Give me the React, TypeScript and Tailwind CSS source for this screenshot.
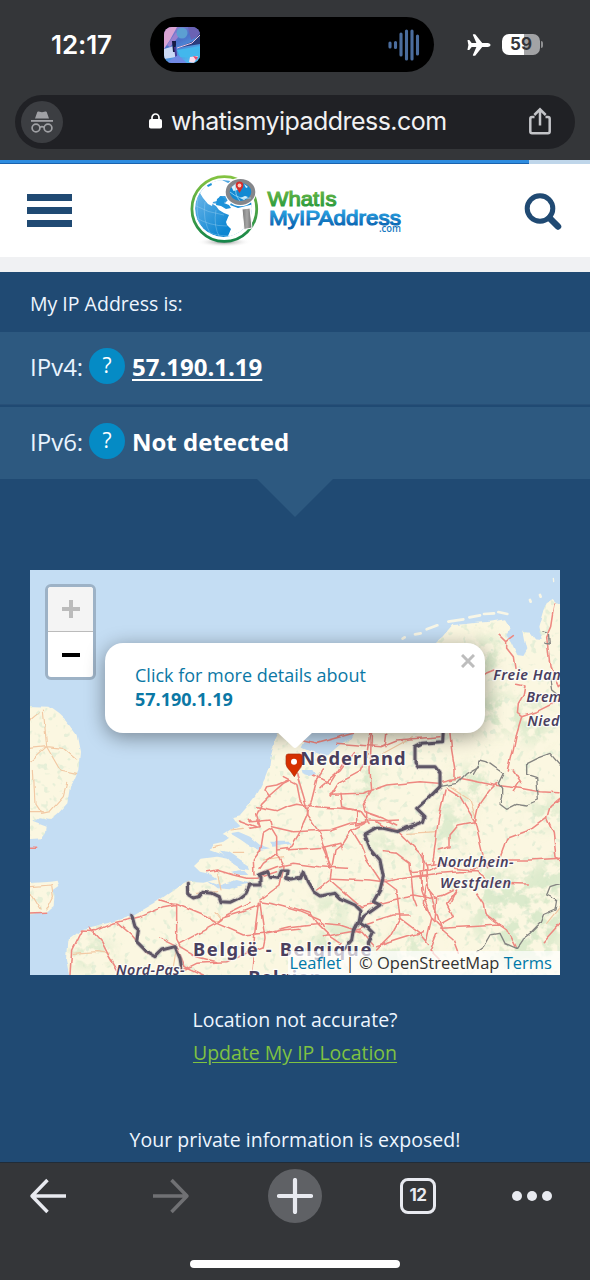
import React from "react";

const land =
  "M120,1230 L108,1170 112,1112 135,1095 155,1078 250,1055 305,1037 370,1000 440,950 475,932 520,935 560,925 540,912 510,905 492,888 515,866 560,860 600,868 575,850 542,838 550,822 580,815 600,802 578,792 600,778 630,770 612,752 605,742 630,735 650,712 675,680 690,655 705,625 718,590 722,560 735,510 755,470 850,300 1210,225 1240,200 1270,165 1310,162 1340,158 1380,155 1425,148 1440,172 1428,195 1445,220 1462,255 1480,258 1492,238 1485,210 1480,185 1500,188 1515,208 1535,210 1525,170 1538,125 1550,100 1565,90 1580,104 1600,100 1600,1230Z";
const england =
  "M-15,408 L55,410 85,432 110,455 140,495 150,545 145,600 132,630 120,650 112,700 85,730 60,750 30,745 10,755 50,770 48,785 35,805 -15,808Z M-15,940 L60,935 80,932 85,948 68,960 76,980 74,1008 50,1028 -15,1036Z";

const greens: [number, number, number, number][] = [
  [1440, 980, 140, 60], [1520, 1040, 110, 80], [1400, 1060, 80, 50], [1380, 930, 60, 30],
  [1560, 920, 70, 50], [1490, 1130, 100, 60], [1250, 800, 50, 30], [1260, 745, 60, 30],
  [1330, 640, 70, 50], [1080, 820, 70, 25], [900, 1010, 60, 30], [930, 1110, 80, 50],
  [1400, 430, 70, 60], [1510, 460, 50, 60], [1550, 730, 50, 40], [1000, 640, 40, 60],
  [1150, 1120, 60, 40], [1370, 260, 50, 60], [180, 1150, 70, 40], [1080, 1170, 60, 40],
];

const roads = [
  // Randstad and the west
  "M780,630 L760,640 720,675 695,700 680,735 690,770 M760,620 L800,640 810,690 835,720 830,740 805,795 780,835 740,840",
  "M680,710 L740,722 770,708 800,700 860,710 930,715 990,720 1020,760",
  "M720,680 L705,660 710,650 740,645 775,630 M655,745 L665,755 720,750 725,770 790,785 900,780 960,760 1010,757",
  "M725,775 L700,790 692,840 670,870 672,915 M725,775 L740,800 740,850 700,880 690,895 M740,850 L762,890 750,945 690,990",
  "M680,750 L690,770 660,775 M625,750 L680,770",
  // Centre and east
  "M800,610 L815,660 830,710 835,740 870,790 890,850 900,895 M880,600 L860,630 845,690 835,720 M870,650 L930,600 970,545",
  "M900,680 L925,640 990,605 1010,560 1020,490 M900,673 L1000,670 1070,645 1170,635 1225,640 1290,625 M1025,480 L1020,600 1025,660 1000,700 1005,725 1060,745 1100,765",
  "M800,505 L860,520 970,490 M920,520 L1050,530 1100,510 1230,500 M950,560 L900,640 850,615",
  "M1065,530 L1070,490 M930,670 L935,710 990,725 M980,720 L980,765 1010,755 1010,725",
  "M770,840 L840,835 880,832 930,820 935,840 M880,835 L905,895 900,930 980,1000 995,1010 M900,930 L860,960 M690,910 L740,890 790,880 870,890 950,895",
  "M1010,757 L965,780 940,820 915,840 905,895 M965,780 L990,820 1010,870 1050,930 1060,945 M905,925 L1020,930 1060,935 1150,920 1190,918",
  "M1040,755 L1060,768 1100,780 1130,810 1170,850 1190,890 1195,950 1215,1010 1235,1080 M1020,750 L1060,752 1108,750",
  // Ruhr
  "M1060,845 L1100,850 1140,880 1150,985 1160,1010 M1145,920 L1230,910 1290,905 1340,905 1370,930 1400,940 1495,942",
  "M1190,885 L1230,880 1270,895 1330,900 1350,885 1400,870 1500,870 1590,865",
  "M1140,905 L1200,900 1230,885 M1180,850 L1175,960 1205,1045 1190,1110 M1190,940 L1180,1000 1210,1050 1230,1070",
  "M1245,660 L1225,750 1208,880 M1250,655 L1290,680 1335,755 1360,860 1370,890 M1225,840 L1260,830 1260,795 1285,765 1335,755",
  "M1335,755 L1345,710 1380,660 1400,640 M1290,625 L1390,645 1470,655 1530,665 1590,668 M1470,635 L1450,665 M1450,600 L1475,640",
  "M1590,685 L1560,710 1550,745 1510,775 1430,805 1410,860 M1550,745 L1570,790 1578,860 1590,875",
  "M1260,1000 L1280,960 1250,1000 1270,1040 1235,1060 M1120,980 L1150,975 1200,985 1240,975 1270,960",
  "M1230,1075 L1320,1070 1410,1065 M1340,970 L1360,1000 1365,1030 1395,1055 1430,1080 1455,1130",
  "M1060,930 L1100,960 1110,1045 1170,1090 1195,1120 M1040,1050 L1090,1035 1140,1035 M1110,1045 L1080,1100 1040,1140 M1050,1000 L1110,985",
  // Belgium and northern France
  "M120,1215 L125,1140 155,1080 200,1082 250,1060 330,1040 400,1010 440,1003 530,1040 560,1060 640,1095 700,1090 760,1080 810,1075",
  "M175,1070 L215,1115 235,1155 270,1215 M265,1060 L305,1095 335,1130 350,1150",
  "M390,990 L440,1005 440,1110 450,1130 M450,1120 L560,1060 575,1045 640,1025 690,1005 M450,1130 L500,1160 560,1175 M560,1060 L590,1035 660,1000",
  "M690,995 L720,1000 760,1010 810,1025 870,1050 880,1070 M685,1000 L675,1080 665,1215 M690,1000 L705,1105 700,1130",
  "M460,1200 L500,1180 590,1175 700,1130 M390,1105 L440,1130 465,1190 520,1215 M530,905 L560,900 610,915 650,925 680,925 740,905",
  "M700,1090 L780,1070 870,1060 930,1065 990,1085 M780,1010 L840,1030 860,1060 900,1100 930,1120 M880,1100 L990,1080 1030,1125 M990,1010 L1040,1000",
  "M970,1080 L1030,1060 M1040,1130 L1100,1110 1180,1085 M1235,1080 L1270,1110 1285,1150 M1220,1090 L1200,1140 1240,1180",
  // North-east
  "M1365,312 L1395,300 M1410,195 L1430,215 1450,200 1430,215 1430,235 1450,260 1455,295 M1460,340 L1485,345 1480,375 1465,400 1462,430 1475,440 1460,490 1450,540 1435,600",
  "M1475,440 L1520,425 1590,390 M1575,105 L1565,170 1550,205 1555,240 1560,290 1585,350 1590,345 M1260,490 L1265,540 1275,600 1275,630",
  "M0,832 L20,832 M-2,1032 L50,1030 M1540,1115 L1590,1060 M1200,960 L1220,985 1215,1050 M1170,905 L1180,960",
];

const minorRoads = [
  "M0,535 L50,530 100,535 140,570 M50,530 L40,420 M50,530 L0,575 M50,530 L90,600 140,610 M0,450 L30,425 M10,600 L15,700 35,730 60,725 100,680 110,640 M0,725 L40,725 M0,950 L65,945 70,980 50,1020 M0,970 L30,1020",
  "M130,1150 L200,1145 240,1150 M560,910 L570,960 M500,970 L560,965 M540,1040 L545,1055 575,1050 555,1025 M1260,650 L1320,690 1340,750 M1130,790 L1220,785 M1590,1010 L1550,1060",
  "M600,780 L640,775 M550,830 L575,825 M610,850 L640,850 M430,1190 L440,1130 M700,870 L760,860 M1060,550 L1150,500",
];

const borders = [
  "M475,940 L476,975 490,984 505,980 515,967 545,970 565,980 570,995 600,997 625,985 645,970 655,950",
  "M655,945 L690,945 690,925 685,915 710,905 718,922 745,925 755,900 775,900 770,925 785,930 812,925 820,905 832,935 850,965 870,978 915,970 930,985 975,1005 990,1020 985,1050 970,1080 965,1110 940,1140",
  "M305,1035 L315,1070 325,1080 320,1115 350,1145 375,1160 395,1140 435,1130 450,1165 455,1195",
  "M1240,480 L1238,515 1175,520 1155,530 1155,575 1165,590 1215,590 1230,610 1230,650 1195,685 1160,715 1185,740 1180,755 1100,785 1060,775 1040,775 1005,795 1020,835 1050,870 1060,920 1050,960 1030,995 1050,1005 1000,1040 990,1060 1015,1075 1030,1090 1015,1120 1020,1150",
];

const regional = [
  "M1230,650 L1280,640 1310,610 1345,590 1350,570 1370,575 1405,600 1420,610 1405,640 1415,655 1415,680 1410,700 1430,715 1460,700 1490,705 1525,690 1520,620 1490,610 1490,580 1520,565 1560,550 1590,585",
  "M1590,940 L1560,950 1550,975 1580,990 1575,1020 1540,1035 1530,1060 1500,1090 1480,1105 1460,1135 1425,1120 1410,1090 1380,1095 1360,1130 1340,1145",
  "M1535,185 L1555,190 1558,222 1545,220 M1560,330 L1565,360 1590,380 M1330,610 L1345,585",
];

function MapDrawing() {
  return (
    <svg viewBox="0 0 1590 1215" className="block h-full w-full" preserveAspectRatio="none">
      <defs>
        <clipPath id="land-clip">
          <path d={land} />
          <path d={england} />
        </clipPath>
        <filter id="speckle" x="-10%" y="-10%" width="120%" height="120%">
          <feTurbulence type="fractalNoise" baseFrequency="0.022" numOctaves="4" seed="8" result="n" />
          <feColorMatrix in="n" type="matrix" values="0 0 0 0 0.66  0 0 0 0 0.80  0 0 0 0 0.57  0 0 8 0 -3.5" result="m" />
          <feGaussianBlur in="SourceAlpha" stdDeviation="22" result="b" />
          <feComposite in="m" in2="b" operator="in" />
        </filter>
        <filter id="light-speckle" x="0" y="0" width="100%" height="100%">
          <feTurbulence type="fractalNoise" baseFrequency="0.05" numOctaves="2" seed="3" result="n" />
          <feColorMatrix in="n" type="matrix" values="0 0 0 0 0.74  0 0 0 0 0.84  0 0 0 0 0.66  0 0 9 0 -5.5" />
        </filter>
        <filter id="rough" x="-5%" y="-5%" width="110%" height="110%">
          <feTurbulence type="fractalNoise" baseFrequency="0.022" numOctaves="2" seed="5" result="n" />
          <feDisplacementMap in="SourceGraphic" in2="n" scale="13" xChannelSelector="R" yChannelSelector="G" />
        </filter>
      </defs>
      <rect width="1590" height="1215" fill="#c4ddf3" />
      <g filter="url(#rough)">
        <path d={land} fill="#fbf7e1" />
        <path d={england} fill="#fbf7e1" />
      </g>
      <g clipPath="url(#land-clip)">
        <rect width="1590" height="1215" filter="url(#light-speckle)" opacity=".75" />
        <g filter="url(#speckle)" opacity=".8">
          {greens.map(([x, y, rx, ry]) => (
            <ellipse key={`${x}-${y}`} cx={x} cy={y} rx={rx} ry={ry} />
          ))}
        </g>
      </g>
      {/* Frisian islands */}
      <g fill="none" stroke="#f8f6e6" strokeWidth="8" strokeLinecap="round">
        <path d="M1118,206 L1124,202 M1155,193 L1172,190 M1190,178 L1222,166 M1255,155 L1300,148 M1318,142 L1350,136 M1362,132 L1392,130 M1405,126 L1432,132 M1500,90 L1502,95 M1530,75 L1532,80" />
        <path d="M1570,25 L1571,35" strokeWidth="4" />
      </g>
      {/* Inland water and estuaries */}
      <g fill="#c4ddf3" filter="url(#rough)">
        <path d="M810,485 L975,485 965,505 935,520 905,545 890,560 850,545 815,530 825,510Z" />
        <path d="M812,600 L850,600 858,612 840,618 815,610Z M1445,195 L1462,200 1480,215 1485,235 1460,245Z" />
        <path d="M600,790 L625,785 660,800 690,825 720,835 690,840 655,825 630,808Z M570,842 L595,845 620,862 655,885 660,900 630,895 600,875Z M530,930 L570,945 620,930 655,940 600,958 560,955Z" />
        <path d="M600,905 L640,900 655,915 620,915Z M720,815 L780,815 785,822 730,830Z" />
      </g>
      <g fill="none" strokeLinecap="round" strokeLinejoin="round" filter="url(#rough)">
        {minorRoads.map((d) => (
          <path key={d} d={d} stroke="#f2c9a4" strokeWidth="3.5" />
        ))}
        {roads.map((d) => (
          <path key={d} d={d} stroke="#ee8881" strokeWidth="4.6" />
        ))}
        {regional.map((d) => (
          <path key={d} d={d} stroke="#858582" strokeWidth="4" />
        ))}
        {borders.map((d) => (
          <path key={d} d={d} stroke="#a7a0a8" strokeWidth="15" strokeOpacity=".45" />
        ))}
        {borders.map((d) => (
          <path key={d} d={d} stroke="#5e5766" strokeWidth="9" />
        ))}
      </g>
      <g
        fontFamily="'Noto Sans', 'Open Sans', sans-serif"
        fontWeight="700"
        fill="#4a3f5e"
        stroke="#ffffff"
        strokeOpacity=".75"
        strokeWidth="8"
        strokeLinejoin="round"
        paintOrder="stroke"
      >
        <text x="811" y="586" fontSize="55" textLength="316">Nederland</text>
        <text x="489" y="1157" fontSize="55" textLength="535">België - Belgique</text>
        <text x="655" y="1242" fontSize="55" textLength="220">Belgien</text>
        <g fontStyle="italic" fontSize="43" fontWeight="600">
          <text x="1390" y="331" textLength="248">Freie Hanse</text>
          <text x="1489" y="395" textLength="155">Bremen</text>
          <text x="1492" y="467" textLength="235">Niedersach</text>
          <text x="1221" y="891" textLength="230">Nordrhein-</text>
          <text x="1230" y="954" textLength="213">Westfalen</text>
          <text x="258" y="1216" textLength="206">Nord-Pas-</text>
        </g>
      </g>
      {/* Location pin */}
      <path d="M775,552 H809 Q816,552 816,559 V582 Q815,592 804,603 L793,620 781,603 Q769,592 768,582 V559 Q768,552 775,552Z" fill="#d63000" stroke="#a92b0c" strokeWidth="2" />
      <circle cx="792" cy="575" r="9" fill="#fff" />
    </svg>
  );
}

function Logo() {
  return (
    <svg viewBox="180 165 240 90" className="h-[90px] w-[240px]">
      <defs>
        <linearGradient id="ring" x1="0" y1="0" x2="0" y2="1">
          <stop offset="0" stopColor="#83c341" />
          <stop offset="1" stopColor="#16864a" />
        </linearGradient>
        <linearGradient id="sea" x1="0" y1="0" x2="1" y2="1">
          <stop offset="0" stopColor="#7dbfee" />
          <stop offset=".7" stopColor="#0d86d2" />
        </linearGradient>
        <linearGradient id="what" x1="0" y1="0" x2="0" y2="1">
          <stop offset="0.1" stopColor="#6fb844" />
          <stop offset="1" stopColor="#1e963d" />
        </linearGradient>
        <linearGradient id="addr" x1="0" y1="0" x2="0" y2="1">
          <stop offset="0.2" stopColor="#2ba4e3" />
          <stop offset="0.9" stopColor="#0863b0" />
        </linearGradient>
        <linearGradient id="handle" x1="0" y1="0" x2="1" y2="0">
          <stop offset="0" stopColor="#777" />
          <stop offset=".5" stopColor="#a6a6a6" />
          <stop offset="1" stopColor="#6b6b6b" />
        </linearGradient>
        <radialGradient id="shade">
          <stop offset="0" stopColor="#666" stopOpacity=".8" />
          <stop offset="1" stopColor="#fff" stopOpacity="0" />
        </radialGradient>
        <clipPath id="globe-clip">
          <circle cx="223.500" cy="208.500" r="28.500" />
        </clipPath>
      </defs>
      <ellipse cx="224" cy="242" rx="27" ry="5" fill="url(#shade)" />
      <circle cx="224.300" cy="209" r="32.400" fill="#fff" stroke="url(#ring)" strokeWidth="2.800" />
      <g clipPath="url(#globe-clip)">
        <circle cx="223.500" cy="208.500" r="28.500" fill="url(#sea)" />
        <path d="M200,193 L205,186 212,181 220,179 230,184 231,192 226,196 220,196 217,201 213,202 212,206 208,204 203,198Z" fill="#fff" />
        <path d="M211,203 L216,206 219,210 224,213 229,215 226,222 227,225 231,229 228,236 232,240 256,230 254,204 238,208 230,205 232,201 228,200 225,203 221,201 219,204Z" fill="#fff" />
        <path d="M217,199 L221,196 225,199 224,203 229,205 231,208 226,209 221,206 216,205Z M206,184 l5,-2 1,3 -4,2Z" fill="#1d93da" />
        <g fill="none" stroke="#a8d9f4" strokeOpacity=".6" strokeWidth=".6">
          <path d="M194,205 Q208,213 224,215 M195,217 Q209,226 227,226 M201,229 Q213,236 230,236 M205,202 Q202,220 211,235 M216,210 Q213,226 220,238 M198,197 Q195,213 202,230" />
        </g>
      </g>
      <path d="M242,209 L250,208 252,228 244,229.500Z" fill="url(#handle)" stroke="#fff" strokeWidth="1" />
      <ellipse cx="240.500" cy="192" rx="15.800" ry="14.300" fill="#fff" />
      <ellipse cx="240.500" cy="192" rx="12.800" ry="11" fill="#1389d2" stroke="#85868a" strokeWidth="4" />
      <path d="M231.500,187 l5,-4 3,2 -2,5 -4,1Z M240,198 l5,-2 3,1 -4,3Z M244,184 l4,3 -2,1Z" fill="#dff2fb" />
      <path d="M230,192 Q239,200 251,198 M236,184 Q234,195 240,201" fill="none" stroke="#98d5f2" strokeWidth=".8" />
      <path d="M239.500,193 L236,187 Q234.500,182 239.500,181.500 Q244.500,182 243,187Z" fill="#d62d29" />
      <circle cx="239.500" cy="185.500" r="1.900" fill="#ffc9bd" />
      <g fontFamily="'Liberation Sans', sans-serif" strokeWidth="1.100">
        <text x="267.500" y="205.500" fontSize="21" textLength="69" lengthAdjust="spacingAndGlyphs" fill="url(#what)" stroke="url(#what)">WhatIs</text>
        <text x="269" y="224.500" fontSize="21" textLength="132" lengthAdjust="spacingAndGlyphs" fill="url(#addr)" stroke="url(#addr)">MyIPAddress</text>
        <text x="379" y="231.800" fontSize="10.500" textLength="22" lengthAdjust="spacingAndGlyphs" fontFamily="'Open Sans', sans-serif" fontWeight="600" fill="#1579c0">.com</text>
      </g>
    </svg>
  );
}

function StatusBar() {
  return (
    <div className="flex h-[95px] pt-[17px] font-['Inter','Roboto',sans-serif]">
      <div className="flex h-[55px] w-[150px] items-center pl-[51px] text-[26px] font-semibold tracking-[-0.1px] text-white">12:17</div>
      <div className="flex h-[55px] w-[284px] items-center justify-between rounded-full bg-black pr-[14px] pl-[14px]">
        <svg viewBox="0 0 36 36" className="h-9 w-9">
          <defs>
            <linearGradient id="art" x1="0" y1="0" x2=".6" y2="1">
              <stop offset="0" stopColor="#a77fd0" />
              <stop offset=".45" stopColor="#4b70c9" />
              <stop offset="1" stopColor="#4fb6ef" />
            </linearGradient>
            <clipPath id="art-clip"><rect width="36" height="36" rx="8" /></clipPath>
            <filter id="art-soft"><feGaussianBlur stdDeviation=".7" /></filter>
          </defs>
          <g clipPath="url(#art-clip)">
            <rect width="36" height="36" fill="url(#art)" />
            <g filter="url(#art-soft)">
              <path d="M0,0 H13 L6,13 0,22Z" fill="#d9a3d3" />
              <path d="M3,18 L12,5 15,9 6,20Z" fill="#9a80cf" />
              <circle cx="18" cy="6" r="5.500" fill="#5c9fd2" />
              <path d="M24,0 H36 V8 L27,13Z" fill="#6a62b4" />
              <path d="M36,6 L30,14 13,21 24,19 36,17Z" fill="#2c3e7d" />
              <path d="M36,8 L28,16 13,21" fill="none" stroke="#e9c5e4" />
              <path d="M0,22 L10,19 12,30 0,32Z" fill="#cbd9f5" />
              <path d="M13,23 L36,19 V32 L16,30Z" fill="#43b7ed" />
              <path d="M8,14 h4 v4 l-1,7 h-2Z" fill="#141b45" />
              <path d="M11,20 L13,36" stroke="#4a3a99" strokeWidth="2" />
              <path d="M2,36 L14,28 23,36Z" fill="#7189e4" />
              <path d="M26,30 L34,29 30,36 25,35Z" fill="#f6dcec" />
              <path d="M29,29 l5,1 -2,3Z" fill="#e74769" />
            </g>
          </g>
        </svg>
        <svg viewBox="0 0 32 32" className="h-8 w-8" stroke="#4b6d9e" strokeWidth="3.100" strokeLinecap="round">
          <path d="M2,14 V18 M7.500,13.500 V18.500 M13,5 V26 M18.500,2 V30 M24,2 V30 M29.500,7 V25" />
        </svg>
      </div>
      <div className="flex h-[55px] items-center pl-[33px]">
        <svg viewBox="0 0 24 22" className="h-[22px] w-6">
          <path d="M23.500,11 C23.500,9.600 21.500,9 19.500,9 H15.200 L8.600,0.800 C8.300,0.400 8,0.300 7.600,0.300 H6.300 C5.900,0.300 5.700,0.700 5.900,1.100 L9.400,9 H4.700 L2.500,6.200 C2.300,6 2.100,5.900 1.800,5.900 H1 C.6,5.900 .4,6.200 .5,6.600 L1.400,11 .5,15.400 C.4,15.800 .6,16.100 1,16.100 H1.800 C2.100,16.100 2.300,16 2.500,15.800 L4.700,13 H9.400 L5.900,20.900 C5.700,21.300 5.900,21.700 6.300,21.700 H7.600 C8,21.700 8.300,21.600 8.600,21.200 L15.200,13 H19.500 C21.500,13 23.500,12.400 23.500,11Z" fill="#fff" />
        </svg>
        <div className="ml-[11px] flex h-[21px] w-[38px] items-center justify-center rounded-[7px] bg-[linear-gradient(90deg,#fff_59%,#a2a3a5_59%)] text-[17px] font-bold text-[#333539]">59</div>
        <div className="ml-[1px] h-[7px] w-[2px] rounded-r-full bg-[#8f9092]" />
      </div>
    </div>
  );
}

function AddressBar() {
  return (
    <div className="mx-[15px] flex h-[54px] items-center rounded-full bg-[#202125] pl-[6px] font-['Inter','Roboto',sans-serif]">
      <div className="flex h-[42px] w-[42px] items-center justify-center rounded-full bg-[#3c3e42]">
        <svg viewBox="0 0 22 22" className="h-[22px] w-[22px]">
          <path d="M4,7.500 L6.300,1 C6.500,.4 7,.3 7.600,.5 L11,1.300 14.400,.5 C15,.3 15.500,.4 15.700,1 L18,7.500Z" fill="#a0a1a5" />
          <path d="M0,9 H22 V10.800 H0Z" fill="#a0a1a5" />
          <g fill="none" stroke="#a0a1a5" strokeWidth="1.700">
            <circle cx="5" cy="17" r="3.900" />
            <circle cx="17" cy="17" r="3.900" />
            <path d="M8.800,16.400 Q11,15 13.200,16.400" />
          </g>
        </svg>
      </div>
      <div className="flex w-[466px] items-center pb-[2px] pl-[86px]">
        <svg viewBox="0 0 13 16" className="mr-[9px] h-4 w-[13px]">
          <rect y="6" width="13" height="9.500" rx="1.800" fill="#fff" />
          <path d="M3,7 V4.500 a3.500,3.500 0 0 1 7,0 V7" fill="none" stroke="#fff" strokeWidth="1.700" />
        </svg>
        <span className="text-[25px] leading-none tracking-[-0.54px] whitespace-nowrap text-[#f1f1f3]">whatismyipaddress.com</span>
      </div>
      <svg viewBox="0 0 22 28" className="mb-[3px] h-7 w-[22px]" fill="none" stroke="#c3c4c8" strokeWidth="2.500">
        <path d="M5.500,10 H3 Q1.300,10 1.300,11.700 V24.500 Q1.300,26.200 3,26.200 H19 Q20.700,26.200 20.700,24.500 V11.700 Q20.700,10 19,10 H16.500" />
        <path d="M11,18.500 V2.500 M5.300,8 L11,2.300 16.700,8" />
      </svg>
    </div>
  );
}

function IpRow({ label, children }: { label: string; children: React.ReactNode }) {
  return (
    <div className="flex h-[72px] items-center bg-[#2d5980] pb-[2px] pl-[30px] text-[24px] text-white">
      <span className="w-[59px] text-[#e9f4ff]">{label}</span>
      <span className="mb-[3px] flex h-9 w-9 items-center justify-center rounded-full bg-[#058bc5] text-[21px]">?</span>
      <span className="ml-[7px] font-bold">{children}</span>
    </div>
  );
}

function MapPanel() {
  return (
    <div className="relative mx-[30px] mt-[53px] h-[405px] overflow-hidden bg-[#c4ddf3]">
      <MapDrawing />
      <div className="absolute top-[14px] left-[15px] h-[96px] w-[51px] overflow-hidden rounded-[6px] border-[3px] border-[#9db2c6] bg-white">
        <div className="flex h-[45px] items-center justify-center border-b border-[#bbb] bg-[#f4f4f4]">
          <svg viewBox="0 0 18 18" className="h-[18px] w-[18px]"><path d="M9,0 V18 M0,9 H18" stroke="#bbb" strokeWidth="4" /></svg>
        </div>
        <div className="flex h-[46px] items-center justify-center">
          <div className="h-1 w-[18px] bg-black" />
        </div>
      </div>
      <div className="absolute top-[73px] left-[75px] h-[90px] w-[380px] rounded-[18px] bg-white pt-[20px] pl-[30px] text-[18px] leading-6 text-[#0b78a5] shadow-[0_4px_20px_rgba(0,0,0,0.4)]">
        <div>Click for more details about</div>
        <div className="font-bold">57.190.1.19</div>
        <svg viewBox="0 0 14 14" className="absolute top-[11px] right-[10px] h-[14px] w-[14px]"><path d="M1,1 L13,13 M13,1 L1,13" stroke="#bdbdbd" strokeWidth="3" /></svg>
        <svg viewBox="0 0 36 18" className="absolute top-[89px] left-[172px] h-[18px] w-9"><path d="M0,0 H36 L20,15 Q18,17 16,15Z" fill="#fff" /></svg>
      </div>
      <div className="absolute right-0 bottom-0 flex h-6 w-[272px] items-center justify-end bg-white/70 pr-[8px] text-[16.500px] whitespace-pre text-[#333]">
        <span className="text-[#0078a8]">Leaflet</span>
        <span> | © OpenStreetMap </span>
        <span className="text-[#0078a8]">Terms</span>
      </div>
    </div>
  );
}

export default function App() {
  return (
    <div className="flex h-[1280px] w-[590px] flex-col overflow-hidden bg-[#343639] font-['Open_Sans','Noto_Sans',sans-serif]">
      <StatusBar />
      <AddressBar />
      <div className="mt-[11px] flex h-[4px] bg-[#bfd6ea]">
        <div className="h-full w-[529px] border-b border-[#1a63ae] bg-[#2d8ce0]" />
      </div>
      <header className="flex h-[93px] items-center bg-white pl-[27px]">
        <div className="flex w-[45px] flex-col gap-[6px]">
          <div className="h-[7px] bg-[#204a73]" />
          <div className="h-[7px] bg-[#204a73]" />
          <div className="h-[7px] bg-[#204a73]" />
        </div>
        <div className="ml-[108px] pb-[1px]"><Logo /></div>
        <svg viewBox="0 0 38 38" className="mt-[2px] ml-[104px] h-[38px] w-[38px]" fill="none" stroke="#204a73">
          <circle cx="16" cy="15.500" r="12.800" strokeWidth="5" />
          <path d="M25.500,25 L34,33.500" strokeWidth="6.500" strokeLinecap="round" />
        </svg>
      </header>
      <div className="h-[15px] bg-[#f0f1f3]" />
      <main className="flex h-[890px] flex-col bg-[#204a73] text-[19.500px] text-[#eef6ff]">
        <div className="flex h-[60px] items-center pt-[4px] pl-[30px]">My IP Address is:</div>
        <IpRow label="IPv4:">
          <span className="underline decoration-2 underline-offset-[3px]">57.190.1.19</span>
        </IpRow>
        <div className="h-[3px] border-t border-[#285078]" />
        <IpRow label="IPv6:">Not detected</IpRow>
        <svg viewBox="0 0 76 38" className="mx-auto h-[38px] w-[76px]"><path d="M0,0 H76 L38,38Z" fill="#2d5980" /></svg>
        <MapPanel />
        <div className="mt-[28px] flex flex-col items-center leading-[33px]">
          <div>Location not accurate?</div>
          <div className="text-[#7fc242] underline underline-offset-2">Update My IP Location</div>
          <div className="mt-[54px] tracking-[0.02px]">Your private information is exposed!</div>
        </div>
      </main>
      <footer className="flex h-[118px] flex-col border-t border-[#202c38] bg-[#343639] font-['Inter','Roboto',sans-serif]">
        <div className="flex h-[66px] items-center">
          <svg viewBox="0 0 37 36" className="ml-[29px] h-9 w-[37px]" fill="none" stroke="#e8eaf0" strokeWidth="3.500" strokeLinejoin="round">
            <path d="M37,18 H3 M18.500,2 L3,18 18.500,34" />
          </svg>
          <svg viewBox="0 0 37 36" className="ml-[87px] h-9 w-[37px]" fill="none" stroke="#707174" strokeWidth="3.500" strokeLinejoin="round">
            <path d="M0,18 H34 M18.500,2 L34,18 18.500,34" />
          </svg>
          <div className="ml-[78px] flex h-[54px] w-[54px] items-center justify-center rounded-full bg-[#5f6165]">
            <svg viewBox="0 0 36 36" className="h-9 w-9" stroke="#e8eaf0" strokeWidth="4.200" strokeLinecap="round"><path d="M18,2 V34 M2,18 H34" /></svg>
          </div>
          <div className="ml-[78px] flex h-9 w-9 items-center justify-center rounded-[8px] border-[3.500px] border-[#e8eaf0] text-[17px] font-bold tracking-[-0.5px] text-[#e8eaf0]">12</div>
          <div className="ml-[75.500px] flex gap-[5px]">
            <div className="h-[10px] w-[10px] rounded-full bg-[#e8eaf0]" />
            <div className="h-[10px] w-[10px] rounded-full bg-[#e8eaf0]" />
            <div className="h-[10px] w-[10px] rounded-full bg-[#e8eaf0]" />
          </div>
        </div>
        <div className="mx-auto mt-[31px] h-2 w-[210px] rounded-full bg-white" />
      </footer>
    </div>
  );
}
